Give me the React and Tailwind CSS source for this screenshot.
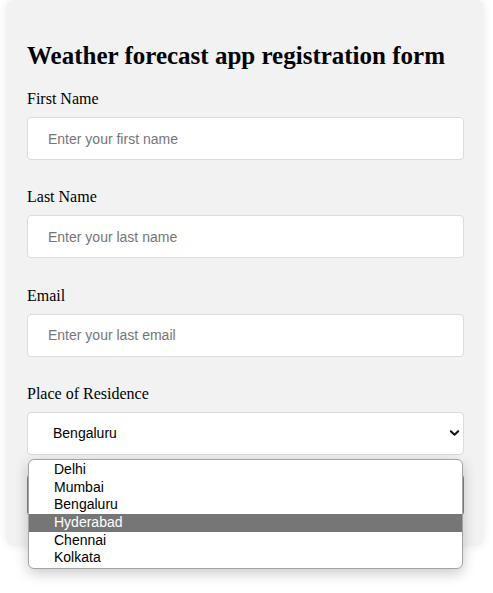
import React, { useState } from 'react'

const cities = ['Delhi', 'Mumbai', 'Bengaluru', 'Hyderabad', 'Chennai', 'Kolkata']

function Field({ label, placeholder, type = 'text' }) {
    return (
        <div className="mb-[28.33px]">
            <label className="block text-[16px] leading-[18px] mb-[9px] text-black">
                {label}
            </label>
            <input
                type={type}
                placeholder={placeholder}
                className="block w-full h-[43px] px-[20px] bg-white border border-[#dcdcdc] rounded-[4px] text-[14px] text-black placeholder:text-[#767676] outline-none"
                style={{ fontFamily: '"Liberation Sans", Arial, sans-serif' }}
            />
        </div>
    )
}

export default function App() {
    const [city] = useState('Bengaluru')
    const hovered = 'Hyderabad'

    return (
        <div className="min-h-screen bg-white" style={{ fontFamily: '"Liberation Serif", "Times New Roman", serif' }}>
            <div className="ml-[6px] w-[478px] bg-[#f2f2f2] rounded-lg pt-[42px] pb-[30px] pl-[21px] pr-[20px] shadow-[0_0_10px_rgba(0,0,0,0.08)]">
                <h2 className="text-[25px] leading-[28px] font-bold text-black mb-[20px]">
                    Weather forecast app registration form
                </h2>

                <Field label="First Name" placeholder="Enter your first name" />
                <Field label="Last Name" placeholder="Enter your last name" />
                <Field label="Email" placeholder="Enter your last email" type="email" />

                <div>
                    <label className="block text-[16px] leading-[18px] mb-[9px] text-black">
                        Place of Residence
                    </label>
                    <div className="relative">
                        <div
                            className="flex items-center justify-between w-full h-[43px] pl-[25px] pr-[3px] bg-white border border-[#dcdcdc] rounded-[4px] text-[14px] text-black"
                            style={{ fontFamily: '"Liberation Sans", Arial, sans-serif' }}
                        >
                            <span>{city}</span>
                            <svg width="11" height="10" viewBox="0 0 11 10" fill="none">
                                <path d="M1.8 3.2 L5.5 6.8 L9.2 3.2" stroke="#111" strokeWidth="2" strokeLinecap="round" strokeLinejoin="round" />
                            </svg>
                        </div>

                        <ul
                            className="absolute left-[1px] top-[47px] w-[435px] z-10 py-[1px] bg-white border border-[#a3a3a3] rounded-[6px] overflow-hidden shadow-[0_4px_14px_rgba(0,0,0,0.22)] text-[14px]"
                            style={{ fontFamily: '"Liberation Sans", Arial, sans-serif' }}
                        >
                            {cities.map(c => (
                                <li
                                    key={c}
                                    className={`h-[17.7px] leading-[17.7px] pl-[25px] ${c === hovered ? 'bg-[#767676] text-white' : 'text-black'}`}
                                >
                                    {c}
                                </li>
                            ))}
                        </ul>
                    </div>
                </div>

                <button
                    className="block w-full h-[42px] mt-[19px] bg-white border border-[#4caf50] rounded-[4px] text-[16px] text-[#4caf50]"
                >
                    Submit
                </button>
            </div>
        </div>
    )
}
